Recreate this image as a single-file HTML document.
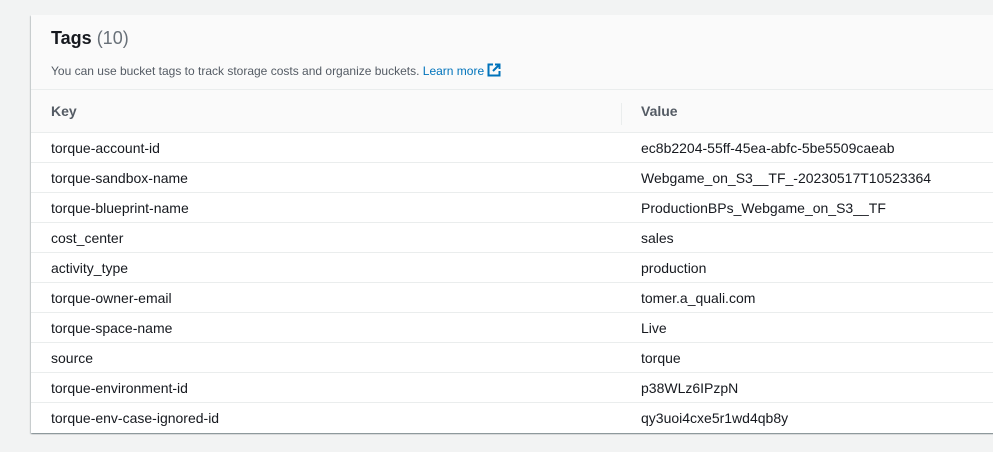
<!DOCTYPE html>
<html><head><meta charset="utf-8"><style>
html,body{margin:0;padding:0;}
body{width:993px;height:452px;background:#f2f3f3;font-family:"Liberation Sans",sans-serif;position:relative;overflow:hidden;}
.card{position:absolute;left:31px;top:15px;width:970px;height:418px;background:#fff;box-shadow:0 1px 1px rgba(0,28,36,.3),1px 1px 1px rgba(0,28,36,.15),-1px 1px 1px rgba(0,28,36,.15);}
.hd{height:74px;background:#fafafa;border-bottom:1px solid #eaeded;position:relative;}
h2{position:absolute;left:20px;top:13px;margin:0;font-size:18px;font-weight:bold;color:#16191f;}
h2 span{font-weight:normal;color:#687078;}
.desc{position:absolute;left:20px;top:48px;font-size:12px;color:#545b64;}
.desc a{color:#0073bb;text-decoration:none;}
.th{height:42px;background:#fafafa;border-bottom:1px solid #eaeded;position:relative;font-weight:bold;font-size:14px;color:#545b64;}
.th div{position:absolute;top:13px;}
.sep{position:absolute;left:590px;top:10px;width:1px;height:22px;background:#eaeded;}
.row{height:29px;border-bottom:1px solid #eaeded;position:relative;font-size:14px;color:#16191f;}
.row:last-child{border-bottom:none;}
.row div{position:absolute;top:7px;}
.k{left:20px;}.v{left:610px;}
</style></head><body>
<div class="card">
<div class="hd"><h2>Tags <span>(10)</span></h2>
<div class="desc">You can use bucket tags to track storage costs and organize buckets. <a>Learn more <svg width="14" height="14" viewBox="0 0 14 14" style="vertical-align:-2px"><path d="M6 1.5H1.5v11h11V8" fill="none" stroke="#0073bb" stroke-width="2"/><path d="M8 1.5h4.5V6M12.5 1.5 6 8" fill="none" stroke="#0073bb" stroke-width="2"/></svg></a></div></div>
<div class="th"><div class="k">Key</div><div class="sep"></div><div class="v">Value</div></div>
<div class="row"><div class="k">torque-account-id</div><div class="v">ec8b2204-55ff-45ea-abfc-5be5509caeab</div></div>
<div class="row"><div class="k">torque-sandbox-name</div><div class="v">Webgame_on_S3__TF_-20230517T10523364</div></div>
<div class="row"><div class="k">torque-blueprint-name</div><div class="v">ProductionBPs_Webgame_on_S3__TF</div></div>
<div class="row"><div class="k">cost_center</div><div class="v">sales</div></div>
<div class="row"><div class="k">activity_type</div><div class="v">production</div></div>
<div class="row"><div class="k">torque-owner-email</div><div class="v">tomer.a_quali.com</div></div>
<div class="row"><div class="k">torque-space-name</div><div class="v">Live</div></div>
<div class="row"><div class="k">source</div><div class="v">torque</div></div>
<div class="row"><div class="k">torque-environment-id</div><div class="v">p38WLz6IPzpN</div></div>
<div class="row"><div class="k">torque-env-case-ignored-id</div><div class="v">qy3uoi4cxe5r1wd4qb8y</div></div>
</div>
</body></html>
